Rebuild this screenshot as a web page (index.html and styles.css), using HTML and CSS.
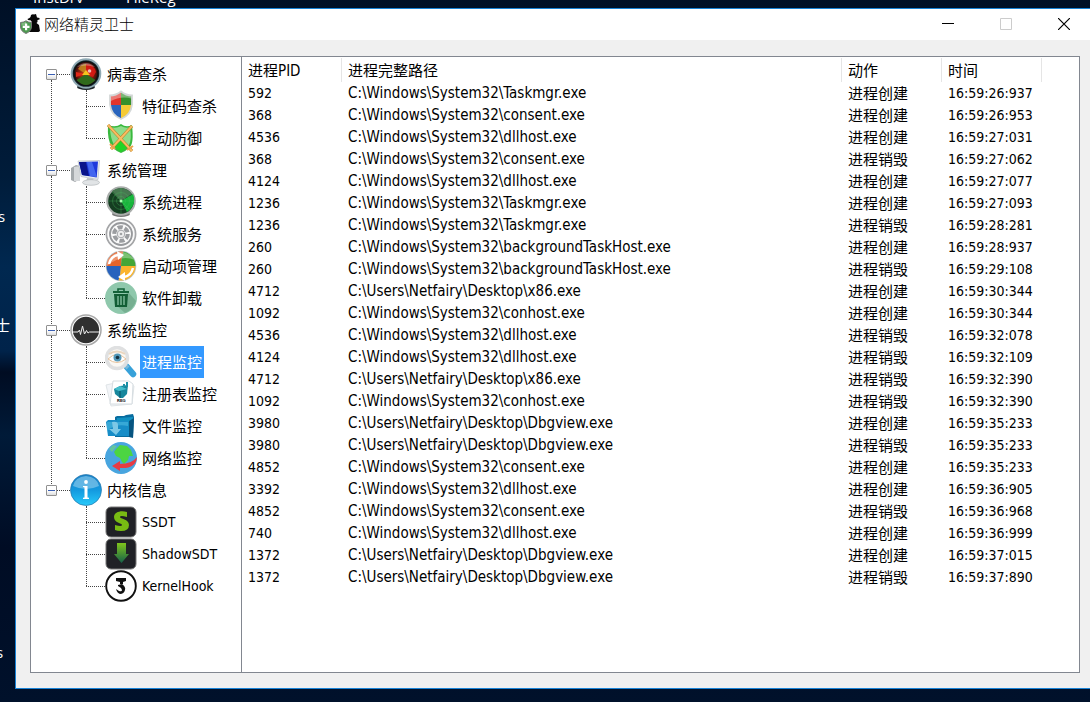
FILE: index.html
```html
<!DOCTYPE html>
<html lang="zh-CN">
<head>
<meta charset="utf-8">
<title>网络精灵卫士</title>
<link rel="stylesheet" href="styles.css">
</head>
<body class="desktop">
<span class="shortcut shortcut-a">InstDrv</span>
<span class="shortcut shortcut-b">FileReg</span>
<span class="shortcut shortcut-c">s</span>
<span class="shortcut shortcut-d">士</span>
<span class="shortcut shortcut-e">s</span>
<main class="window">
<header class="titlebar">
<svg class="app-icon" viewBox="0 0 20 20"><path d="M7.500 5Q10 4 10.500 3L11 1Q12.500 0 14 .5L16 0l1 3.500 2.500.5v1.500l-2 .5v2l-1 1 2.500 2 1 6-1.500 1H9l1-6 1-3 1-1-1-1V6.500L8 6z" fill="#080808"/><path d="M.5 8.500Q3.500 8.500 6 6.800 8.500 8.500 11.500 8.500V13q-.5 4.500-5.500 6.500Q1 17.500.5 13z" fill="#4c9a4f" stroke="#777" stroke-width="1"/><path d="M1.500 9Q4 9 6 7.500v4H1.500z" fill="#a0cda0" opacity=".6"/><path d="M5 9.500h2.200v2.300h2.300V14H7.200v2.300H5V14H2.700v-2.200H5z" fill="#fff"/></svg>
<h1 class="title">网络精灵卫士</h1>
<div class="controls">
<button class="control" aria-label="最小化"><svg viewBox="0 0 12 12"><path d="M0 5.500h12" stroke="#000"/></svg></button>
<button class="control" aria-label="最大化" disabled><svg viewBox="0 0 12 12"><path d="M.5.5h11v11H.5z" fill="none" stroke="#ccc"/></svg></button>
<button class="control" aria-label="关闭"><svg viewBox="0 0 12 12"><path d="M0 0l12 12M12 0L0 12" stroke="#000" stroke-width="1.200"/></svg></button>
</div>
</header>
<div class="panel">
<nav class="sidebar">
<ul class="tree">
<li class="branch">
<div class="row"><button class="toggle" aria-label="折叠"></button><span class="lead"></span>
<svg class="icon" viewBox="0 0 32 32"><defs><radialGradient id="g1"><stop offset="0" stop-color="#d8481c"/><stop offset=".6" stop-color="#8a2010"/><stop offset="1" stop-color="#2a0907"/></radialGradient></defs><ellipse cx="16" cy="29" rx="9" ry="3" fill="#1a2327"/><circle cx="16" cy="15.500" r="14.300" fill="#1c2b31" stroke="#8fa9b3" stroke-width="2"/><circle cx="16" cy="15.500" r="12" fill="url(#g1)" stroke="#0b1214" stroke-width="1.200"/><path d="M16 16L25.500 22Q16 32 6.500 22z" fill="#2f6a1c"/><path d="M16 16L8 11Q11 6 16 6z" fill="#c48a20" opacity=".85"/><path d="M16 16V6q8 0 10 8l-3 5z" fill="#d81a14" opacity=".9"/><path d="M16 16L6 19V14z" fill="#e02818"/><path d="M16 12l4 5h-8z" fill="#f5c41e"/><path d="M7 9q9-8 18 0-9-3-18 0z" fill="#fff" opacity=".3"/><circle cx="19.500" cy="13" r="1.800" fill="#fff" opacity=".7"/></svg>
<button class="label">病毒查杀</button></div>
<ul class="leaves">
<li class="leaf"><svg class="icon" viewBox="0 0 32 32"><defs><clipPath id="c1"><path d="M5 5.500q6 0 11-4 5 4 11 4v9Q26 25 16 29 6 25 5 14.500z"/></clipPath></defs><g clip-path="url(#c1)"><path d="M4 0h12v15H4z" fill="#e0342b"/><path d="M16 0h12v15H16z" fill="#36902c"/><path d="M4 15h12v16H4z" fill="#2964bd"/><path d="M16 15h12v16H16z" fill="#f6cb35"/><path d="M4 0h24v9Q16 5 4 12z" fill="#fff" opacity=".35"/></g><path d="M5 5.500q6 0 11-4 5 4 11 4v9Q26 25 16 29 6 25 5 14.500z" fill="none" stroke="#d4d8d8" stroke-width="1.800"/></svg><button class="label">特征码查杀</button></li>
<li class="leaf"><svg class="icon" viewBox="0 0 32 32"><path d="M3 3q8 3 13-1 5 4 11 1 2 18-2 22-4 4-9 6-5-2-9-6-5-7-4-22z" fill="#39b93e"/><path d="M5 5q6 2 11-1 5 3 9 1 2 12-1 18-3 3-8 6-5-3-7-6-4-8-4-18z" fill="#8fdd8b"/><path d="M8 24l8-7 8 7-8 6z" fill="#22d426"/><path d="M3 3l24 26M27 4L6 27" stroke="#b57824" stroke-width="3"/><path d="M3 3l24 26M27 4L6 27" stroke="#f8bd62" stroke-width="2"/><path d="M5 22l5 5M22 28l6-4" stroke="#eda24a" stroke-width="2"/></svg><button class="label">主动防御</button></li>
</ul>
</li>
<li class="branch">
<div class="row"><button class="toggle" aria-label="折叠"></button><span class="lead"></span>
<svg class="icon" viewBox="0 0 32 32"><path d="M1 14l5-3 4 1v13l-5 3-4-2z" fill="#a4a9ac"/><path d="M4 13l6-1v15H4z" fill="#d5d8da"/><path d="M8 7l21.500-.5-1.500 19-17-3z" fill="#e9edf1" stroke="#aeb5ba" stroke-width=".6"/><path d="M9 8l19-.5-1.300 16L12 21z" fill="#1e39db"/><path d="M9 8h7l3 14-7-1z" fill="#0a148a"/><path d="M17 8h5l4 12v3l-6-1z" fill="#5b85fb" opacity=".6"/><path d="M17 24h6l1 4h-8z" fill="#c4c8cc"/><ellipse cx="21" cy="28.500" rx="8.500" ry="2.800" fill="#e1e4e6" stroke="#a7acb0" stroke-width=".6"/></svg>
<button class="label">系统管理</button></div>
<ul class="leaves">
<li class="leaf"><svg class="icon" viewBox="0 0 32 32"><ellipse cx="16" cy="28" rx="9" ry="3" fill="#777"/><circle cx="16" cy="15" r="13.800" fill="#153d21" stroke="#a9adab" stroke-width="2"/><path d="M16 15L28 8Q32 19 22 26z" fill="#18b63c"/><path d="M16 15L7 5q11-7 20 3z" fill="#477850"/><g fill="none" stroke="#4bbd61" stroke-width=".5" opacity=".7"><circle cx="16" cy="15" r="4.500"/><circle cx="16" cy="15" r="8.500"/><path d="M3 15h26M16 2v26M7 6l18 18"/></g><circle cx="16" cy="15" r="1.500" fill="#a9ffad"/></svg><button class="label">系统进程</button></li>
<li class="leaf"><svg class="icon" viewBox="0 0 32 32"><circle cx="16" cy="16" r="14.600" fill="#fafafa" stroke="#a4a5a7" stroke-width="1.700"/><circle cx="16" cy="16" r="11" fill="none" stroke="#97999c" stroke-width="1.800"/><circle cx="16" cy="16" r="6.800" fill="none" stroke="#9b9da0" stroke-width="4" stroke-dasharray="5.120 2"/><circle cx="16" cy="16" r="3.800" fill="#eee" stroke="#a5a7aa"/><circle cx="16" cy="16" r="1.300" fill="#a1a3a5"/></svg><button class="label">系统服务</button></li>
<li class="leaf"><svg class="icon" viewBox="0 0 32 32"><defs><clipPath id="c2"><circle cx="16" cy="16" r="14.500"/></clipPath></defs><circle cx="16" cy="16" r="15.300" fill="#b7c6ce"/><g clip-path="url(#c2)"><path d="M0 0h19q-3 8-3 16H0z" fill="#e6642b"/><path d="M19 0h13v16H16q0-8 3-16z" fill="#43a637"/><path d="M0 16h16q0 8-3 16H0z" fill="#2862bd"/><path d="M16 16h16v16H13q3-8 3-16z" fill="#fbb42c"/><path d="M2 10Q16-6 30 10 16 4 2 16z" fill="#fff" opacity=".3"/></g><path d="M4 14Q6 6 13 5" fill="none" stroke="#fff" stroke-width="2.500"/><path d="M12 1l7 4-6 5z" fill="#fff"/><path d="M28 18q-2 8-9 9" fill="none" stroke="#fff" stroke-width="2.500"/><path d="M20 22l-7 5 7 4z" fill="#fff"/></svg><button class="label">启动项管理</button></li>
<li class="leaf"><svg class="icon" viewBox="0 0 32 32"><circle cx="16" cy="16" r="16" fill="#8fc8ac"/><path d="M23 10l8 9q-3 9-11 12l-9-8z" fill="#76af91"/><path d="M8 9h16v2H8z" fill="#136238"/><path d="M13 9V7h6v2" fill="none" stroke="#136238" stroke-width="1.600"/><path d="M9 12h14l-1 13H10z" fill="#125d34"/><path d="M13 14v9M16 14v9M19 14v9" stroke="#8ac5a6" stroke-width="1.300"/></svg><button class="label">软件卸载</button></li>
</ul>
</li>
<li class="branch">
<div class="row"><button class="toggle" aria-label="折叠"></button><span class="lead"></span>
<svg class="icon" viewBox="0 0 32 32"><circle cx="16" cy="16" r="15" fill="#fff" stroke="#a8a8a8" stroke-width="1.500"/><circle cx="16" cy="16" r="13.200" fill="#303030"/><path d="M3 18h5l1.500-2 1 4.500L12.500 12l2 8 2-3.500 1.500 2.500 1.500-1h9.500" fill="none" stroke="#eee" stroke-width="1"/></svg>
<button class="label">系统监控</button></div>
<ul class="leaves">
<li class="leaf"><svg class="icon" viewBox="0 0 32 32"><path d="M22 21l6 7" stroke="#37a1d9" stroke-width="6.500" stroke-linecap="round"/><path d="M19 18l4 4" stroke="#77b8da" stroke-width="4"/><circle cx="12" cy="12" r="10.500" fill="#faf8f4" stroke="#dfe0e1" stroke-width="3.500"/><path d="M3 13Q12 4 21 13 12 20 3 13z" fill="#fff" stroke="#e5c19b" stroke-width="1"/><path d="M4 8Q12 3 20 8" fill="none" stroke="#ead6bf" stroke-width="2"/><circle cx="12.500" cy="11.500" r="4" fill="#5499b9"/><circle cx="12.500" cy="11.500" r="1.800" fill="#173240"/></svg><button class="label selected">进程监控</button></li>
<li class="leaf"><svg class="icon" viewBox="0 0 32 32"><path d="M1 7l18-4 10 5-2 18-21 2z" fill="#f3f5f8" stroke="#e0e5e8"/><path d="M8 3h16l4 3-1 20H5z" fill="#fff" stroke="#d6dde1"/><path d="M9 11l6-3 8-1-1 9-4 4h-3l-5-4z" fill="#16869c"/><path d="M9 11l5 2 8-2-7-3z" fill="#45bdcb"/><path d="M15 13v7" stroke="#075066"/><path d="M18 6h2v3h-2zM21 4h2v5h-2z" fill="#1c90a6"/><text x="12" y="24" class="reg-text">REG</text></svg><button class="label">注册表监控</button></li>
<li class="leaf"><svg class="icon" viewBox="0 0 32 32"><path d="M10 7l2-1h7l2-1 7-1 1 3-1 20H10z" fill="#086c9f"/><path d="M12 8l16-1-1 18H10z" fill="#1291c2"/><path d="M1 12l2-2h8l2 1h10l1 15H3z" fill="#178dc7"/><path d="M2 12h21v4Q10 13 2 21z" fill="#46b3dd" opacity=".7"/><path d="M24 11l5-3-1 20-4-1z" fill="#075480"/><path d="M7 12q6-1 6 3v4h3l-5 6-7-6h4z" fill="#7cc8e6"/></svg><button class="label">文件监控</button></li>
<li class="leaf"><svg class="icon" viewBox="0 0 32 32"><circle cx="16" cy="16" r="16" fill="#48a5df"/><path d="M11 7l4-4 7 1 4 4 2 6h-4l-1 4-4 4-2-2-2-4-4-2-2-4z" fill="#4cd542"/><path d="M4 7l4-4 4 1-5 6z" fill="#63c59f"/><path d="M32 15q-1 12-17 11v3l-8-5 8-5v3q12 0 17-7z" fill="#e73b43"/></svg><button class="label">网络监控</button></li>
</ul>
</li>
<li class="branch">
<div class="row"><button class="toggle" aria-label="折叠"></button><span class="lead"></span>
<svg class="icon" viewBox="0 0 32 32"><defs><linearGradient id="g2" x2="0" y2="1"><stop offset="0" stop-color="#1b82c8"/><stop offset=".5" stop-color="#1499df"/><stop offset="1" stop-color="#27cafa"/></linearGradient></defs><circle cx="16" cy="16" r="15.500" fill="url(#g2)" stroke="#2876aa" stroke-width=".7"/><path d="M3 12Q5 3 16 2q11 1 13 10-13 6-26 0z" fill="#8acbed" opacity=".65"/><circle cx="16" cy="8" r="1.900" fill="#fff"/><path d="M13 12H17.500v11.500l1.500.3V25h-6v-1.200l1.500-.3v-10L13 13z" fill="#fff"/></svg>
<button class="label">内核信息</button></div>
<ul class="leaves">
<li class="leaf"><svg class="icon" viewBox="0 0 32 32"><rect x="1" y="1" width="30" height="30" rx="5" fill="#202126" stroke="#777" stroke-width="1"/><path d="M22 6v5q-7-2-7 0c0 2 9 2 9 8q0 6-8 6-4 0-6-1v-5q7 2 7 0c0-2-8-2-8-8 0-5 7-7 13-5z" fill="#78bb13"/></svg><button class="label latin">SSDT</button></li>
<li class="leaf"><svg class="icon" viewBox="0 0 32 32"><defs><linearGradient id="g3" x2="0" y2="1"><stop offset="0" stop-color="#7fc41c"/><stop offset="1" stop-color="#15604a"/></linearGradient></defs><rect x="1" y="1" width="30" height="30" rx="5" fill="#202126" stroke="#777"/><path d="M12 5h9v11h3l-7.500 9L9 16h3z" fill="url(#g3)"/></svg><button class="label latin">ShadowSDT</button></li>
<li class="leaf"><svg class="icon" viewBox="0 0 32 32"><circle cx="16" cy="16" r="14.800" fill="#fff" stroke="#111" stroke-width="1.900"/><path d="M11 8h10v3l-3 1v2h-3v-2l-4-1z" fill="#111"/><path d="M17 14q4 3 3 6-1 4-5 4-3-1-4-5l3 2q3 1 3-1l-1-2-3-2v-1z" fill="#111"/></svg><button class="label latin">KernelHook</button></li>
</ul>
</li>
</ul>
</nav>
<section class="log">
<table class="events">
<thead><tr><th class="col-pid">进程PID</th><th class="col-path">进程完整路径</th><th class="col-action">动作</th><th class="col-time">时间</th></tr></thead>
<tbody>
<tr><td>592</td><td class="path">C:\Windows\System32\Taskmgr.exe</td><td class="action">进程创建</td><td>16:59:26:937</td></tr>
<tr><td>368</td><td class="path">C:\Windows\System32\consent.exe</td><td class="action">进程创建</td><td>16:59:26:953</td></tr>
<tr><td>4536</td><td class="path">C:\Windows\System32\dllhost.exe</td><td class="action">进程创建</td><td>16:59:27:031</td></tr>
<tr><td>368</td><td class="path">C:\Windows\System32\consent.exe</td><td class="action">进程销毁</td><td>16:59:27:062</td></tr>
<tr><td>4124</td><td class="path">C:\Windows\System32\dllhost.exe</td><td class="action">进程创建</td><td>16:59:27:077</td></tr>
<tr><td>1236</td><td class="path">C:\Windows\System32\Taskmgr.exe</td><td class="action">进程创建</td><td>16:59:27:093</td></tr>
<tr><td>1236</td><td class="path">C:\Windows\System32\Taskmgr.exe</td><td class="action">进程销毁</td><td>16:59:28:281</td></tr>
<tr><td>260</td><td class="path">C:\Windows\System32\backgroundTaskHost.exe</td><td class="action">进程创建</td><td>16:59:28:937</td></tr>
<tr><td>260</td><td class="path">C:\Windows\System32\backgroundTaskHost.exe</td><td class="action">进程销毁</td><td>16:59:29:108</td></tr>
<tr><td>4712</td><td class="path">C:\Users\Netfairy\Desktop\x86.exe</td><td class="action">进程创建</td><td>16:59:30:344</td></tr>
<tr><td>1092</td><td class="path">C:\Windows\System32\conhost.exe</td><td class="action">进程创建</td><td>16:59:30:344</td></tr>
<tr><td>4536</td><td class="path">C:\Windows\System32\dllhost.exe</td><td class="action">进程销毁</td><td>16:59:32:078</td></tr>
<tr><td>4124</td><td class="path">C:\Windows\System32\dllhost.exe</td><td class="action">进程销毁</td><td>16:59:32:109</td></tr>
<tr><td>4712</td><td class="path">C:\Users\Netfairy\Desktop\x86.exe</td><td class="action">进程销毁</td><td>16:59:32:390</td></tr>
<tr><td>1092</td><td class="path">C:\Windows\System32\conhost.exe</td><td class="action">进程销毁</td><td>16:59:32:390</td></tr>
<tr><td>3980</td><td class="path">C:\Users\Netfairy\Desktop\Dbgview.exe</td><td class="action">进程创建</td><td>16:59:35:233</td></tr>
<tr><td>3980</td><td class="path">C:\Users\Netfairy\Desktop\Dbgview.exe</td><td class="action">进程销毁</td><td>16:59:35:233</td></tr>
<tr><td>4852</td><td class="path">C:\Windows\System32\consent.exe</td><td class="action">进程创建</td><td>16:59:35:233</td></tr>
<tr><td>3392</td><td class="path">C:\Windows\System32\dllhost.exe</td><td class="action">进程创建</td><td>16:59:36:905</td></tr>
<tr><td>4852</td><td class="path">C:\Windows\System32\consent.exe</td><td class="action">进程销毁</td><td>16:59:36:968</td></tr>
<tr><td>740</td><td class="path">C:\Windows\System32\dllhost.exe</td><td class="action">进程创建</td><td>16:59:36:999</td></tr>
<tr><td>1372</td><td class="path">C:\Users\Netfairy\Desktop\Dbgview.exe</td><td class="action">进程创建</td><td>16:59:37:015</td></tr>
<tr><td>1372</td><td class="path">C:\Users\Netfairy\Desktop\Dbgview.exe</td><td class="action">进程销毁</td><td>16:59:37:890</td></tr>
</tbody>
</table>
</section>
</div>
</main>
</body>
</html>
```
FILE: styles.css
```css
* { box-sizing: border-box; }

.desktop {
  position: relative;
  display: flex;
  min-height: 100vh;
  margin: 0;
  padding: 8px 0 13px 15px;
  overflow: hidden;
  background: linear-gradient(180deg, #001026 0%, #001c3a 25%, #002850 38%, #00234a 50%, #000c22 53%, #001a38 62%, #000c24 78%, #00112b 100%);
  color: #000;
  font: 14px/22px "DejaVu Sans Condensed", "Noto Sans CJK SC", sans-serif;
}

/* Desktop shortcut captions partly hidden by the window */
.shortcut {
  position: absolute;
  color: #fff;
  font: 15px/20px "Open Sans", "Noto Sans CJK SC", sans-serif;
}
.shortcut-a { left: 33px; top: -13px; }
.shortcut-b { left: 126px; top: -13px; }
.shortcut-c { left: -2px; top: 206px; }
.shortcut-d { left: -5px; top: 315px; }
.shortcut-e { left: -4px; top: 642px; }

.window {
  position: relative;
  display: flex;
  flex: 1;
  flex-direction: column;
  border: 1px solid #1883d7;
  border-right: 0;
  background: #f0f0f0;
}

.titlebar {
  display: flex;
  align-items: center;
  height: 31px;
  padding: 0 3px 2px 4px;
  background: #fff;
}
.app-icon { width: 20px; height: 20px; }
.title {
  flex: 1;
  margin: 0 0 0 4px;
  font: 300 15px/22px "Noto Sans CJK SC", sans-serif;
}
.controls { display: flex; gap: 12px; }
.control {
  display: grid;
  place-items: center;
  width: 46px;
  height: 28px;
  padding: 0;
  border: 0;
  background: none;
}
.control svg { width: 12px; height: 12px; }

.panel {
  display: flex;
  flex: 1;
  margin: 16px 10px 15px 14px;
  border: 1px solid #828790;
  background: #fff;
}

.sidebar {
  width: 211px;
  padding-top: 1px;
  border-right: 1px solid #828790;
}
.tree, .leaves { margin: 0; padding: 0; list-style: none; }

.branch { position: relative; }
.branch:not(:last-child)::before {
  content: "";
  position: absolute;
  top: 22px;
  bottom: -10px;
  left: 20px;
  border-left: 1px dotted #444;
}
.row, .leaf {
  display: flex;
  align-items: center;
  height: 32px;
}
.row { padding-left: 15px; }
.toggle {
  display: grid;
  place-items: center;
  width: 11px;
  height: 11px;
  padding: 0;
  border: 1px solid #919191;
  border-radius: 1px;
  background: linear-gradient(#fff 50%, #dedede);
}
.toggle::before {
  content: "";
  width: 7px;
  height: 1px;
  background: #3a5fb4;
}
.lead { width: 13px; border-top: 1px dotted #444; }
.icon { flex: none; width: 32px; height: 32px; }
.reg-text { font: bold 4px "Liberation Sans", sans-serif; }

.leaves { position: relative; padding-left: 55px; }
.leaves::before {
  content: "";
  position: absolute;
  top: 0;
  bottom: 16px;
  left: 55px;
  border-left: 1px dotted #444;
}
.leaf::before {
  content: "";
  width: 19px;
  border-top: 1px dotted #444;
}
.label {
  height: 32px;
  margin-left: 3px;
  padding: 0 2px;
  border: 0;
  background: none;
  color: #000;
  font: 15px/32px "Noto Sans CJK SC", sans-serif;
  white-space: nowrap;
}
.latin { font: 14px/32px "DejaVu Sans Condensed", sans-serif; }
.selected { background: #3399ff; color: #fff; }

.log { flex: 1; min-width: 0; overflow: hidden; }
.events {
  width: 800px;
  border-collapse: collapse;
  table-layout: fixed;
}
.events th, .events td {
  padding: 0 6px;
  font-weight: normal;
  text-align: left;
  white-space: nowrap;
}
.events th {
  height: 25px;
  padding-top: 2px;
  background: linear-gradient(#e5e5e5, #e5e5e5) right 1px / 1px 24px no-repeat;
  font-size: 15px;
}
.events td { height: 22px; }
.events .path { font-size: 15px; }
.events .action { font: 15px/22px "Noto Sans CJK SC", sans-serif; }
.col-pid, .col-action, .col-time { width: 100px; }
.col-path { width: 500px; }
```
